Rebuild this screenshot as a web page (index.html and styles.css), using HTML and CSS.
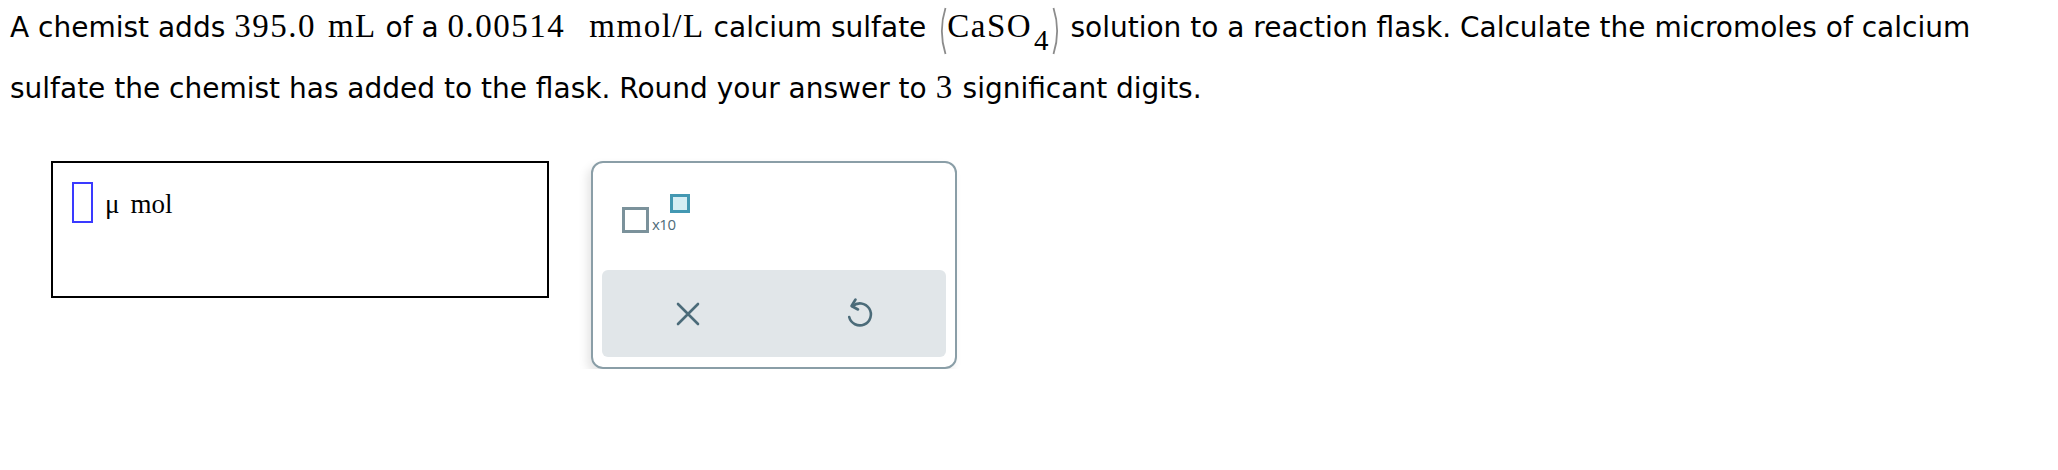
FILE: index.html
```html
<!DOCTYPE html>
<html>
<head>
<meta charset="utf-8">
<link rel="stylesheet" href="styles.css">
</head>
<body>
<div class="page">
  <p class="question">A chemist adds <span class="m">395.0</span><span class="m unit">mL</span> of a <span class="m">0.00514</span><span class="m unit wide">mmol/L</span> calcium sulfate <span class="chem"><svg class="paren" width="10" height="48" viewBox="0 0 10 48"><path d="M8.5 1 Q1.2 24 8.5 47" fill="none" stroke="#8c8c8c" stroke-width="1.8"/></svg><span class="m">CaSO</span><span class="sub">4</span><svg class="paren" width="10" height="48" viewBox="0 0 10 48"><path d="M1.5 1 Q8.8 24 1.5 47" fill="none" stroke="#8c8c8c" stroke-width="1.8"/></svg></span> solution to a reaction flask. Calculate the micromoles of calcium<br>sulfate the chemist has added to the flask. Round your answer to <span class="m">3</span> significant digits.</p>
  <div class="work">
    <div class="answer">
      <span class="slot"></span>
      <span class="unitlabel"><span class="mu">μ</span>mol</span>
    </div>
    <div class="keypad">
      <div class="tools">
        <div class="sci">
          <span class="sci-box"></span>
          <span class="sci-x">x10</span>
          <span class="sci-exp"></span>
        </div>
      </div>
      <div class="actions">
        <button class="btn" aria-label="clear">
          <svg width="24" height="24" viewBox="0 0 24 24"><path d="M2 2 L22 22 M22 2 L2 22" stroke="#4b6b79" stroke-width="2.6" stroke-linecap="round" fill="none"/></svg>
        </button>
        <button class="btn" aria-label="undo">
          <svg width="28" height="36" viewBox="0 0 28 36"><path d="M6.5 10.2 A11 11 0 1 1 3.2 21" stroke="#4b6b79" stroke-width="2.6" stroke-linecap="round" fill="none"/><path d="M9.5 3.5 L5.5 10 L12 13.5" stroke="#4b6b79" stroke-width="2.6" stroke-linecap="round" stroke-linejoin="round" fill="none"/></svg>
        </button>
      </div>
    </div>
  </div>
</div>
</body>
</html>
```
FILE: styles.css
```css
html, body {
  margin: 0;
  padding: 0;
  background: #ffffff;
}
.page {
  padding: 0 0 0 10px;
}
.question {
  margin: -3px 0 0 0;
  font-family: "DejaVu Sans", Verdana, sans-serif;
  font-size: 28px;
  line-height: 61px;
  color: #000;
  white-space: nowrap;
}
.m {
  font-family: "Liberation Serif", "Times New Roman", serif;
  font-size: 33px;
  letter-spacing: 1.5px;
  line-height: 1;
}
.unit {
  margin-left: 12px;
}
.unit.wide {
  margin-left: 24px;
}
.chem {
  display: inline-block;
  line-height: 1;
  margin-left: 2px;
}
.paren {
  vertical-align: -18px;
}
.sub {
  font-family: "Liberation Serif", "Times New Roman", serif;
  font-size: 29px;
  line-height: 1;
  vertical-align: -13px;
  margin-left: 2px;
  margin-right: 3px;
}
.work {
  display: flex;
  align-items: flex-start;
  gap: 42px;
  margin-top: 42px;
  padding-left: 41px;
}
.answer {
  box-sizing: border-box;
  width: 498px;
  height: 137px;
  border: 2px solid #000;
  padding: 19px 0 0 19px;
  display: flex;
  align-items: flex-start;
}
.slot {
  display: block;
  box-sizing: border-box;
  width: 21px;
  height: 41px;
  border: 2px solid #3a3aff;
}
.unitlabel {
  font-family: "Liberation Serif", "Times New Roman", serif;
  font-size: 27px;
  line-height: 31px;
  margin-left: 12px;
  margin-top: 7px;
}
.mu {
  margin-right: 11px;
}
.keypad {
  box-sizing: border-box;
  width: 366px;
  height: 208px;
  border: 2px solid #8a9ea7;
  border-radius: 12px;
  box-shadow: -4px 5px 10px rgba(0, 0, 0, 0.10);
  padding: 0 9px 10px 9px;
  display: flex;
  flex-direction: column;
}
.tools {
  height: 107px;
  padding: 31px 0 0 20px;
  box-sizing: border-box;
}
.sci {
  position: relative;
  width: 70px;
  height: 40px;
}
.sci-box {
  position: absolute;
  left: 0;
  top: 13px;
  box-sizing: border-box;
  width: 27px;
  height: 26px;
  border: 3px solid #7b929b;
}
.sci-x {
  position: absolute;
  left: 30px;
  top: 20px;
  font-family: "Open Sans", "DejaVu Sans", sans-serif;
  font-size: 15px;
  letter-spacing: -0.5px;
  color: #4e6b78;
}
.sci-exp {
  position: absolute;
  left: 48px;
  top: 0;
  box-sizing: border-box;
  width: 20px;
  height: 19px;
  border: 3px solid #4398b2;
  background: #d6eef4;
}
.actions {
  flex: 1;
  background: #e1e6e9;
  border-radius: 6px;
  display: grid;
  grid-template-columns: 1fr 1fr;
}
.btn {
  border: 0;
  background: transparent;
  padding: 0;
  display: flex;
  align-items: center;
  justify-content: center;
}
.btn svg {
  display: block;
}
```
